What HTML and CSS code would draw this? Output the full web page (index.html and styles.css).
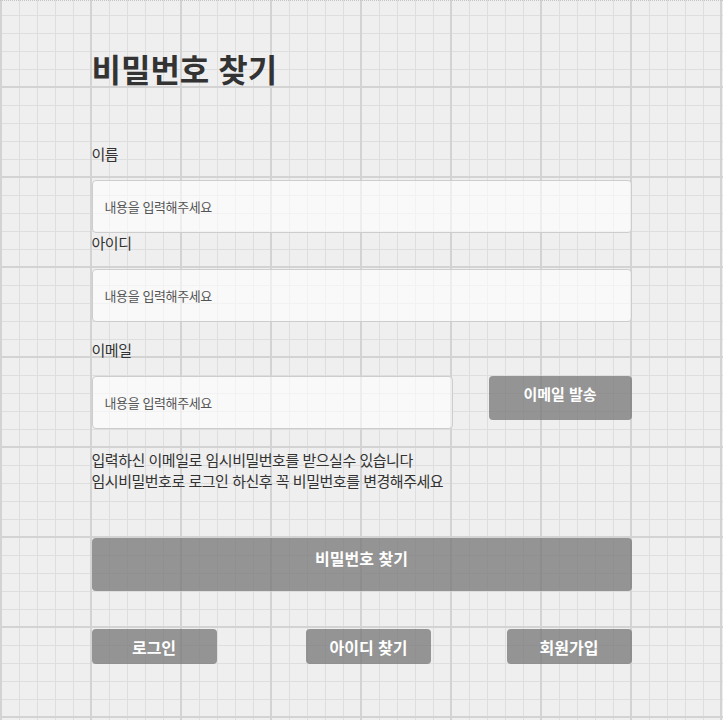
FILE: index.html
```html
<!DOCTYPE html>
<html lang="ko">
<head>
    <meta charset="UTF-8">
    <meta name="viewport" content="width=device-width, initial-scale=1.0">
    <title>비밀번호 찾기</title>
    <link rel="stylesheet" href="styles.css">
</head>
<body>
    <div class="container">
        <h1 class="title">비밀번호 찾기</h1>

        <label class="label" for="name">이름</label>
        <input class="input" type="text" id="name" placeholder="내용을 입력해주세요">

        <label class="label" for="userid">아이디</label>
        <input class="input" type="text" id="userid" placeholder="내용을 입력해주세요">

        <label class="label label-gap" for="email">이메일</label>
        <div class="email-row">
            <input class="input input-email" type="email" id="email" placeholder="내용을 입력해주세요">
            <button class="btn btn-send">이메일 발송</button>
        </div>

        <p class="notice">입력하신 이메일로 임시비밀번호를 받으실수 있습니다<br>임시비밀번호로 로그인 하신후 꼭 비밀번호를 변경해주세요</p>

        <button class="btn btn-main">비밀번호 찾기</button>

        <div class="links">
            <button class="btn btn-link">로그인</button>
            <button class="btn btn-link btn-mid">아이디 찾기</button>
            <button class="btn btn-link">회원가입</button>
        </div>
    </div>
</body>
</html>
```

FILE: styles.css
```css
html {
    background-color: #efefef;
}
body {
    margin: 0;
    min-height: 720px;
    border-top: 1px dotted #c4c4c4;
    box-sizing: border-box;
    font-family: "Noto Sans CJK KR", "Liberation Sans", sans-serif;
    letter-spacing: -0.03em;
    color: #333;
    background-color: #efefef;
    background-image:
        linear-gradient(90deg, #d3d3d3 2px, transparent 2px),
        linear-gradient(0deg, #d3d3d3 2px, transparent 2px),
        linear-gradient(90deg, #dedede 1px, transparent 1px),
        linear-gradient(0deg, #dedede 1px, transparent 1px);
    background-size: 90px 90px, 90px 90px, 18px 18px, 18px 18px;
    background-position: 0 0, 0 -3px, 1px 0, 0 -3px;
}
.container {
    width: 540px;
    margin: 0 auto;
    padding-top: 47px;
    display: flex;
    flex-direction: column;
}
.title {
    margin: 0 0 56px;
    font-size: 32px;
    line-height: 40px;
    font-weight: bold;
    letter-spacing: 0;
}
.label {
    display: block;
    height: 36px;
    font-size: 15px;
    line-height: 20px;
}
.label-gap {
    margin-top: 18px;
}
.input {
    box-sizing: border-box;
    width: 100%;
    height: 53px;
    margin: 0;
    padding: 0 12px;
    border: 1px solid #cdcdcd;
    border-radius: 4px;
    background-color: rgba(255, 255, 255, 0.6);
    font-family: inherit;
    letter-spacing: -0.03em;
    font-size: 13px;
    color: #333;
}
.input::placeholder {
    color: #555;
}
.email-row {
    display: flex;
    justify-content: space-between;
    align-items: flex-start;
}
.input-email {
    width: 361px;
}
.btn {
    box-sizing: border-box;
    margin: 0;
    border: none;
    border-radius: 4px;
    background-color: rgba(118, 118, 118, 0.75);
    color: #fff;
    font-family: inherit;
    letter-spacing: 0;
    font-weight: bold;
    cursor: pointer;
}
.btn-send {
    width: 143px;
    height: 44px;
    padding: 8px 0 0;
    font-size: 15px;
    line-height: 20px;
    display: flex;
    justify-content: center;
    align-items: flex-start;
}
.notice {
    margin: 20px 0 0;
    font-size: 15px;
    line-height: 21px;
}
.btn-main {
    width: 100%;
    height: 53px;
    margin-top: 47px;
    padding: 9px 0 0;
    font-size: 16px;
    line-height: 22px;
    display: flex;
    justify-content: center;
    align-items: flex-start;
}
.links {
    display: flex;
    justify-content: space-between;
    margin-top: 38px;
}
.btn-link {
    width: 125px;
    height: 35px;
    font-size: 16px;
    line-height: 22px;
}
.btn-mid {
    margin-left: 14px;
}
```
